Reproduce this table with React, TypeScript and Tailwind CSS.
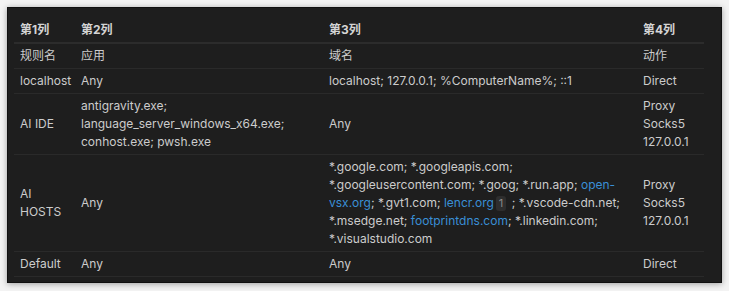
const Link = ({ children }: { children: React.ReactNode }) => (
  <span className="text-[#3a8fd6]">{children}</span>
);

const Line = ({ children }: { children: React.ReactNode }) => (
  <span className="block whitespace-nowrap">{children}</span>
);

const rows = [
  {
    name: "规则名",
    app: "应用",
    domain: "域名",
    action: "动作",
  },
  {
    name: "localhost",
    app: "Any",
    domain: "localhost; 127.0.0.1; %ComputerName%; ::1",
    action: "Direct",
  },
  {
    name: "AI IDE",
    app: (
      <>
        <Line>antigravity.exe;</Line>
        <Line>language_server_windows_x64.exe;</Line>
        <Line>conhost.exe; pwsh.exe</Line>
      </>
    ),
    domain: "Any",
    action: (
      <>
        <Line>Proxy</Line>
        <Line>Socks5</Line>
        <Line>127.0.0.1</Line>
      </>
    ),
  },
  {
    name: (
      <>
        <Line>AI</Line>
        <Line>HOSTS</Line>
      </>
    ),
    app: "Any",
    domain: (
      <>
        <Line>*.google.com; *.googleapis.com;</Line>
        <Line>
          *.googleusercontent.com; *.goog; *.run.app; <Link>open-</Link>
        </Line>
        <Line>
          <Link>vsx.org</Link>; *.gvt1.com; <Link>lencr.org</Link>
          <span className="mx-[2px] inline-block rounded-[3px] bg-[#2e2e2e] px-[3px] text-[11px] leading-[15px] text-[#8a8a8a]">
            1
          </span>{" "}
          ; *.vscode-cdn.net;
        </Line>
        <Line>
          *.msedge.net; <Link>footprintdns.com</Link>; *.linkedin.com;
        </Line>
        <Line>*.visualstudio.com</Line>
      </>
    ),
    action: (
      <>
        <Line>Proxy</Line>
        <Line>Socks5</Line>
        <Line>127.0.0.1</Line>
      </>
    ),
  },
  {
    name: "Default",
    app: "Any",
    domain: "Any",
    action: "Direct",
  },
];

export default function App() {
  return (
    <div className="h-[291px] w-[729px] bg-[#f3f3f3] px-[7px] pt-[7px] font-['Inter','Noto_Sans_CJK_SC',sans-serif]">
      <div className="h-[276px] w-[715px] border border-[#111] bg-[#1e1e1e] pl-[6px] pt-[10px] shadow-[0_1px_6px_rgba(0,0,0,0.35)]">
        <table className="w-[690px] table-fixed border-collapse text-[12px] leading-[18px] text-[#cccccc]">
          <colgroup>
            <col className="w-[61px]" />
            <col className="w-[248px]" />
            <col className="w-[314px]" />
            <col className="w-[67px]" />
          </colgroup>
          <thead>
            <tr className="border-b-2 border-[#2c2c2c]">
              {["第1列", "第2列", "第3列", "第4列"].map((h) => (
                <th
                  key={h}
                  className="px-[6px] py-[3px] text-left font-bold text-[#d4d4d4]"
                >
                  {h}
                </th>
              ))}
            </tr>
          </thead>
          <tbody>
            {rows.map((r, i) => (
              <tr key={i} className="border-b border-[#2a2a2a]">
                <td className="px-[6px] py-[3px] align-middle">{r.name}</td>
                <td className="px-[6px] py-[3px] align-middle">{r.app}</td>
                <td className="px-[6px] py-[3px] align-middle">{r.domain}</td>
                <td className="px-[6px] py-[3px] align-middle">{r.action}</td>
              </tr>
            ))}
          </tbody>
        </table>
      </div>
    </div>
  );
}
